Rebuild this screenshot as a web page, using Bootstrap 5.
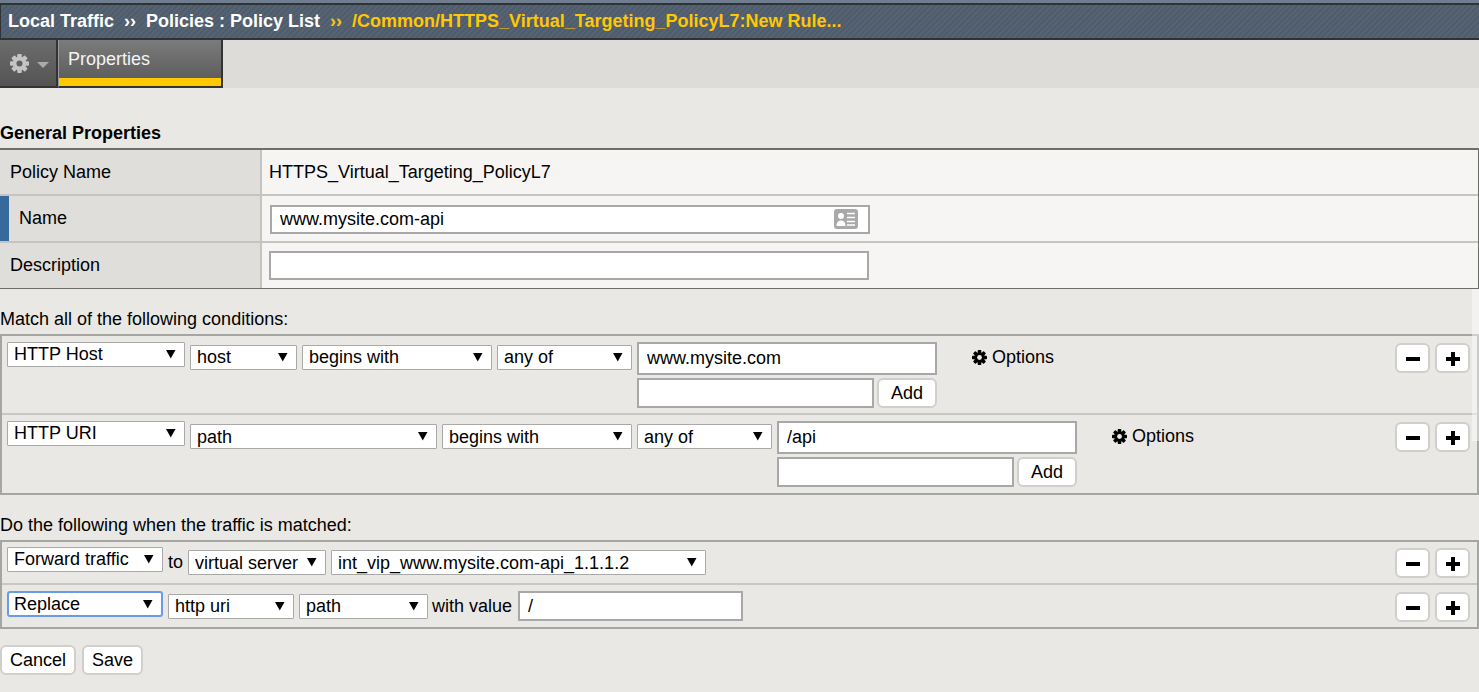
<!DOCTYPE html>
<html lang="en">
<head>
  <meta charset="UTF-8">
  <meta name="viewport" content="width=device-width, initial-scale=1.0">
  <title>Local Traffic - Policy List</title>
  <link href="https://cdn.jsdelivr.net/npm/bootstrap@5.3.2/dist/css/bootstrap.min.css" rel="stylesheet">
  <style>
    html, body { height: 100%; overflow: hidden; }
    body {
      background: #e9e8e4;
      color: #000;
      font-family: "Liberation Sans", Arial, sans-serif;
      font-size: 18px;
      line-height: 22px;
      position: relative;
    }
    /* header */
    .top-strip { height: 3px; background: #6f7d8f; }
    .crumb-bar {
      height: 37px;
      border-top: 2px solid #2e3338;
      border-bottom: 2px solid #2e3338;
      border-left: 1px solid #2e3338;
      padding: 0 0 2px 7px;
      color: #fff;
      font-weight: 700;
      background: repeating-linear-gradient(135deg, #4f5c6b 0 2px, #566372 2px 4px);
    }
    .crumb-sep { margin: 0 10px; }
    .crumb-now { color: #ffc800; }
    .tab-bar { height: 48px; background: #dddcd8; }
    .gear-tab {
      width: 58px;
      border-right: 2px solid #333;
      border-bottom: 2px solid #333;
      background: linear-gradient(#6c6c6c, #545454);
      padding: 14px 0 0 10px;
      gap: 8px;
      color: #c4c4c4;
    }
    .caret-down { border-left: 6px solid transparent; border-right: 6px solid transparent; border-top: 6px solid #aaa; margin-top: 8px; }
    .prop-tab {
      width: 165px;
      border-left: 1px solid #9a9a9a;
      border-right: 2px solid #333;
      border-bottom: 2px solid #333;
      background: linear-gradient(#7b7b7b, #585858);
      color: #f4f4f4;
    }
    .prop-title { padding: 8px 0 0 9px; }
    .prop-mark { height: 8px; background: #ffc800; }

    .sec-head { margin: 19px 0 4px; height: 22px; }
    .sec-first { margin-top: 34px; }

    /* properties table */
    .prop-table { border-top: 2px solid #6e6e6a; border-bottom: 1px solid #6e6e6a; border-right: 1px solid #6e6e6a; background: #f6f5f3; }
    .prop-row { height: 44px; }
    .prop-row + .prop-row { height: 47px; border-top: 2px solid #c5c4bf; }
    .prop-label {
      width: 262px;
      flex: none;
      background: #dfdedb;
      border-right: 2px solid #c5c4bf;
      padding: 11px 0 0 10px;
    }
    .prop-marked { padding-left: 0; padding-top: 0; }
    .req-mark { width: 9px; background: #366a9d; margin-right: 10px; }
    .req-text { padding-top: 11px; }
    .prop-value { padding: 11px 0 0 7px; }
    .prop-value-in { padding: 9px 0 0 8px; }
    .prop-value-desc { padding-top: 8px; padding-left: 7px; }

    /* fields */
    .txt-in.form-control {
      border: 2px solid #a8a8a8;
      border-radius: 0;
      background-color: #fff;
      color: #000;
      font-size: 18px;
      line-height: 22px;
      padding: 0 8px;
      box-shadow: none;
      min-height: 0;
    }
    .in-wide { width: 600px; height: 29px; }
    .in-main { width: 300px; height: 33px; }
    .in-sub { width: 237px; height: 30px; }
    .in-value { width: 225px; height: 30px; }
    .name-wrap { position: relative; }
    .card-icon { position: absolute; right: 12px; top: 4px; }

    .rule-sel.form-select {
      height: 25px;
      border: 1px solid #a9a9a9;
      border-radius: 1px;
      color: #000;
      font-size: 18px;
      line-height: 22px;
      padding: 0 20px 2px 6px;
      box-shadow: none;
      background-color: #fff;
      background-image: url("data:image/svg+xml,%3Csvg xmlns='http://www.w3.org/2000/svg' width='10' height='10'%3E%3Cpath d='M0 1h9.500L4.750 9.500z' fill='%23000'/%3E%3C/svg%3E");
      background-position: right 8px top 6px;
      background-size: 10px 10px;
      background-repeat: no-repeat;
      flex: none;
    }
    .sel-low.form-select { margin-top: 3px; }
    .cond-b .sel-low.form-select, .act-a .sel-low.form-select { padding-bottom: 0; }
    .sel-focus.form-select { height: 26px; border: 2px solid #6a9be8; border-radius: 3px; padding: 0 20px 2px 5px; }
    .w-126 { width: 126px; } .w-129 { width: 129px; } .w-135 { width: 135px; }
    .w-138 { width: 138px; } .w-156 { width: 156px; } .w-178 { width: 178px; }
    .w-107 { width: 107px; } .w-190 { width: 190px; } .w-247 { width: 247px; } .w-375 { width: 375px; }

    /* rule boxes */
    .rule-box { border: 2px solid #a5a5a2; }
    .rule-row { padding: 6px 7px 0 5px; gap: 5px; }
    .rule-row + .rule-row { border-top: 2px solid #c8c7c2; }
    .cond-a { height: 77px; }
    .cond-b { height: 80px; }
    .act-a { height: 41px; padding-top: 5px; }
    .act-b { height: 44px; }
    .val-stack { width: 300px; gap: 3px; }
    .sub-line { gap: 3px; }
    .opt-link { margin: 4px 0 0 30px; gap: 5px; }
    .join-txt { padding-top: 4px; }
    .join-val { margin: 0 1px 0 -1px; padding-top: 4px; }

    .plain-btn.btn {
      --bs-btn-padding-x: 0;
      --bs-btn-padding-y: 0;
      height: 30px;
      background: #fff;
      border: 2px solid #d0cfcb;
      border-radius: 6px;
      color: #000;
      font-size: 18px;
      line-height: 26px;
    }
    .btn-add.btn { width: 60px; }
    .btn-cancel.btn { width: 76px; }
    .btn-save.btn { width: 61px; }
    .icon-btn.btn { width: 35px; padding: 0; }
    .row-tools { margin: 1px 0 0 auto; gap: 5px; }
    .form-foot { margin-top: 16px; gap: 6px; }
    /* pale strip over the right edge of the page */
    .edge-strip { position: absolute; left: 1472px; top: 289px; width: 7px; height: 152px; background: rgba(255, 255, 255, .45); }
  </style>
</head>
<body>
  <svg width="0" height="0" class="position-absolute">
    <mask id="gear-hole" maskUnits="userSpaceOnUse" x="0" y="0" width="20" height="20">
      <rect width="20" height="20" fill="#fff"/>
      <circle cx="10" cy="10" r="3.200" fill="#000"/>
    </mask>
    <symbol id="gear" viewBox="0 0 20 20">
      <g fill="currentColor" mask="url(#gear-hole)">
        <rect x="7.600" y="0" width="4.800" height="20" rx="1"/>
        <rect x="7.600" y="0" width="4.800" height="20" rx="1" transform="rotate(45 10 10)"/>
        <rect x="7.600" y="0" width="4.800" height="20" rx="1" transform="rotate(90 10 10)"/>
        <rect x="7.600" y="0" width="4.800" height="20" rx="1" transform="rotate(135 10 10)"/>
        <circle cx="10" cy="10" r="7"/>
      </g>
    </symbol>
    <symbol id="minus" viewBox="0 0 16 16"><rect x="1" y="6" width="14" height="4" fill="#000"/></symbol>
    <symbol id="plus" viewBox="0 0 16 16"><path d="M1 6h5V1h4v5h5v4h-5v5H6v-5H1z" fill="#000"/></symbol>
  </svg>

  <div class="top-strip"></div>
  <div class="crumb-bar d-flex align-items-center">
    <span>Local Traffic</span><span class="crumb-sep">››</span><span>Policies : Policy List</span><span class="crumb-sep crumb-now">››</span><span class="crumb-now">/Common/HTTPS_Virtual_Targeting_PolicyL7:New Rule...</span>
  </div>
  <div class="tab-bar d-flex">
    <div class="gear-tab d-flex">
      <svg width="19" height="19"><use href="#gear"/></svg>
      <span class="caret-down"></span>
    </div>
    <div class="prop-tab d-flex flex-column justify-content-between">
      <div class="prop-title">Properties</div>
      <div class="prop-mark"></div>
    </div>
  </div>

  <div class="sec-head sec-first fw-bold">General Properties</div>
  <div class="prop-table">
    <div class="prop-row d-flex">
      <div class="prop-label">Policy Name</div>
      <div class="prop-value">HTTPS_Virtual_Targeting_PolicyL7</div>
    </div>
    <div class="prop-row d-flex">
      <div class="prop-label prop-marked d-flex"><span class="req-mark"></span><span class="req-text">Name</span></div>
      <div class="prop-value-in">
        <div class="name-wrap">
          <input class="txt-in form-control in-wide" type="text" value="www.mysite.com-api">
          <svg class="card-icon" width="24" height="20" viewBox="0 0 24 20">
            <rect width="24" height="20" rx="3" fill="#a9a9a9"/>
            <circle cx="7" cy="7" r="3" fill="#fff"/>
            <path d="M2.500 17c0-4 2-5.500 4.500-5.500s4.500 1.500 4.500 5.500z" fill="#fff"/>
            <path d="M13 4.500h8M13 8.500h8M13 12.500h8M13 16h8" stroke="#fff" stroke-width="1.600"/>
          </svg>
        </div>
      </div>
    </div>
    <div class="prop-row d-flex">
      <div class="prop-label">Description</div>
      <div class="prop-value-desc"><input class="txt-in form-control in-wide" type="text"></div>
    </div>
  </div>

  <div class="sec-head">Match all of the following conditions:</div>
  <div class="rule-box">
    <div class="rule-row cond-a d-flex align-items-start">
      <select class="rule-sel form-select w-178"><option>HTTP Host</option></select>
      <select class="rule-sel sel-low form-select w-107"><option>host</option></select>
      <select class="rule-sel sel-low form-select w-190"><option>begins with</option></select>
      <select class="rule-sel sel-low form-select w-135"><option>any of</option></select>
      <div class="val-stack d-flex flex-column">
        <input class="txt-in form-control in-main" type="text" value="www.mysite.com">
        <div class="sub-line d-flex">
          <input class="txt-in form-control in-sub" type="text">
          <button class="plain-btn btn btn-add" type="button">Add</button>
        </div>
      </div>
      <div class="opt-link d-flex align-items-center">
        <svg width="15" height="15"><use href="#gear"/></svg><span>Options</span>
      </div>
      <div class="row-tools d-flex">
        <button class="plain-btn btn icon-btn" type="button"><svg width="16" height="16"><use href="#minus"/></svg></button>
        <button class="plain-btn btn icon-btn" type="button"><svg width="16" height="16"><use href="#plus"/></svg></button>
      </div>
    </div>
    <div class="rule-row cond-b d-flex align-items-start">
      <select class="rule-sel form-select w-178"><option>HTTP URI</option></select>
      <select class="rule-sel sel-low form-select w-247"><option>path</option></select>
      <select class="rule-sel sel-low form-select w-190"><option>begins with</option></select>
      <select class="rule-sel sel-low form-select w-135"><option>any of</option></select>
      <div class="val-stack d-flex flex-column">
        <input class="txt-in form-control in-main" type="text" value="/api">
        <div class="sub-line d-flex">
          <input class="txt-in form-control in-sub" type="text">
          <button class="plain-btn btn btn-add" type="button">Add</button>
        </div>
      </div>
      <div class="opt-link d-flex align-items-center">
        <svg width="15" height="15"><use href="#gear"/></svg><span>Options</span>
      </div>
      <div class="row-tools d-flex">
        <button class="plain-btn btn icon-btn" type="button"><svg width="16" height="16"><use href="#minus"/></svg></button>
        <button class="plain-btn btn icon-btn" type="button"><svg width="16" height="16"><use href="#plus"/></svg></button>
      </div>
    </div>
  </div>

  <div class="sec-head">Do the following when the traffic is matched:</div>
  <div class="rule-box">
    <div class="rule-row act-a d-flex align-items-start">
      <select class="rule-sel form-select w-156"><option>Forward traffic</option></select>
      <span class="join-txt">to</span>
      <select class="rule-sel sel-low form-select w-138"><option>virtual server</option></select>
      <select class="rule-sel sel-low form-select w-375"><option>int_vip_www.mysite.com-api_1.1.1.2</option></select>
      <div class="row-tools d-flex">
        <button class="plain-btn btn icon-btn" type="button"><svg width="16" height="16"><use href="#minus"/></svg></button>
        <button class="plain-btn btn icon-btn" type="button"><svg width="16" height="16"><use href="#plus"/></svg></button>
      </div>
    </div>
    <div class="rule-row act-b d-flex align-items-start">
      <select class="rule-sel sel-focus form-select w-156"><option>Replace</option></select>
      <select class="rule-sel sel-low form-select w-126"><option>http uri</option></select>
      <select class="rule-sel sel-low form-select w-129"><option>path</option></select>
      <span class="join-val">with value</span>
      <input class="txt-in form-control in-value" type="text" value="/">
      <div class="row-tools d-flex">
        <button class="plain-btn btn icon-btn" type="button"><svg width="16" height="16"><use href="#minus"/></svg></button>
        <button class="plain-btn btn icon-btn" type="button"><svg width="16" height="16"><use href="#plus"/></svg></button>
      </div>
    </div>
  </div>

  <div class="form-foot d-flex">
    <button class="plain-btn btn btn-cancel" type="button">Cancel</button>
    <button class="plain-btn btn btn-save" type="button">Save</button>
  </div>
  <div class="edge-strip"></div>

  <script src="https://cdn.jsdelivr.net/npm/bootstrap@5.3.2/dist/js/bootstrap.bundle.min.js"></script>
</body>
</html>
